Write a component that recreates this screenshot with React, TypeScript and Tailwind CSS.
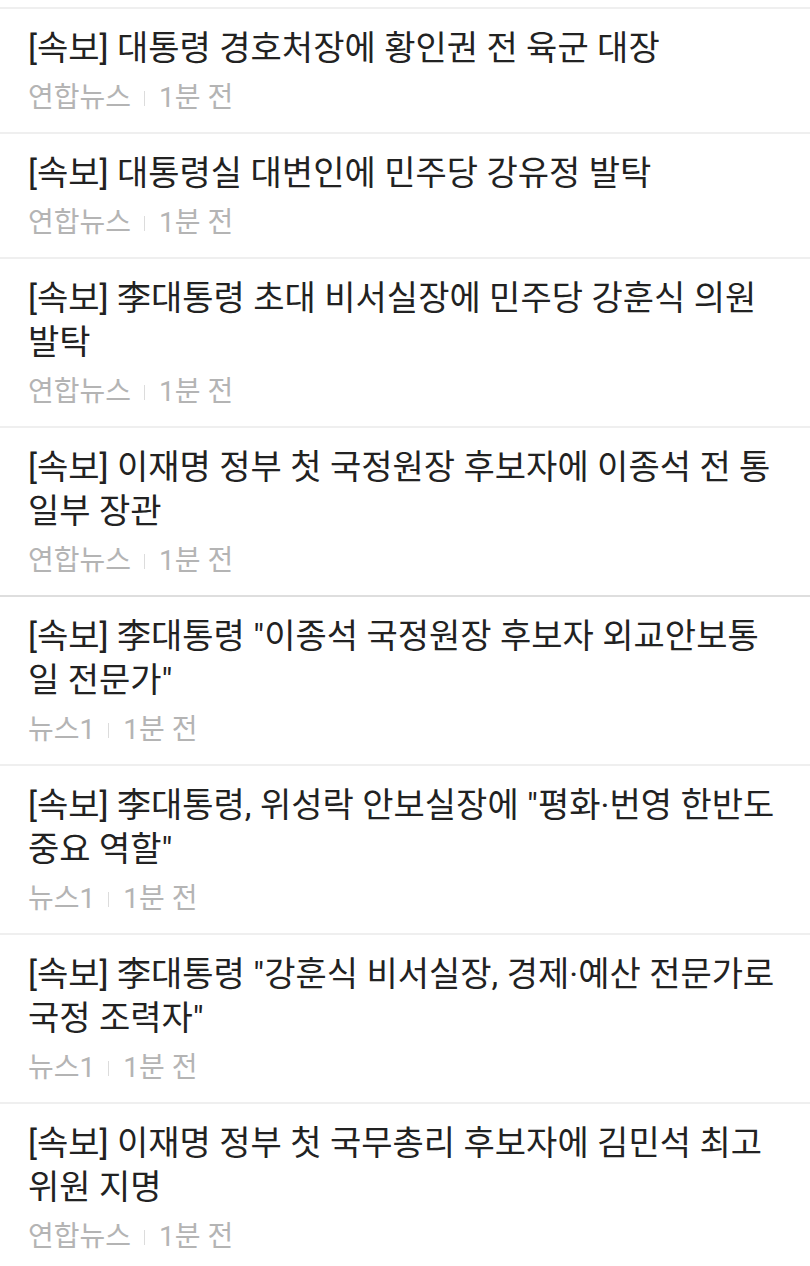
const items = [
  { title: "[속보] 대통령 경호처장에 황인권 전 육군 대장", source: "연합뉴스" },
  { title: "[속보] 대통령실 대변인에 민주당 강유정 발탁", source: "연합뉴스" },
  { title: "[속보] 李대통령 초대 비서실장에 민주당 강훈식 의원 발탁", source: "연합뉴스" },
  { title: "[속보] 이재명 정부 첫 국정원장 후보자에 이종석 전 통일부 장관", source: "연합뉴스" },
  { title: "[속보] 李대통령 \"이종석 국정원장 후보자 외교안보통일 전문가\"", source: "뉴스1", strong: true },
  { title: "[속보] 李대통령, 위성락 안보실장에 \"평화·번영 한반도 중요 역할\"", source: "뉴스1" },
  { title: "[속보] 李대통령 \"강훈식 비서실장, 경제·예산 전문가로 국정 조력자\"", source: "뉴스1" },
  { title: "[속보] 이재명 정부 첫 국무총리 후보자에 김민석 최고위원 지명", source: "연합뉴스" },
];

function NewsRow({ title, source, strong }: { title: string; source: string; strong?: boolean }) {
  return (
    <li
      className={
        strong
          ? "border-t-2 border-[#dedede] pl-[28px] pr-[22px] pt-[17px] pb-[18px]"
          : "border-t-2 border-[#efefef] pl-[28px] pr-[22px] pt-[17px] pb-[18px]"
      }
    >
      <p className="text-[34px] leading-[44px] text-[#222] break-all">{title}</p>
      <div className="mt-[12px] flex items-center text-[28px] leading-[32px] text-[#b4b4b4]">
        <span>{source}</span>
        <span className="ml-[13px] mr-[14px] h-[15px] w-px bg-[#dcdcdc]" />
        <span>1분 전</span>
      </div>
    </li>
  );
}

export default function App() {
  return (
    <div
      className="min-h-[1266px] w-[810px] bg-white pt-[7px]"
      style={{ fontFamily: 'Roboto, "Noto Sans CJK KR", sans-serif' }}
    >
      <ul>
        {items.map((item, i) => (
          <NewsRow key={i} {...item} />
        ))}
      </ul>
    </div>
  );
}
